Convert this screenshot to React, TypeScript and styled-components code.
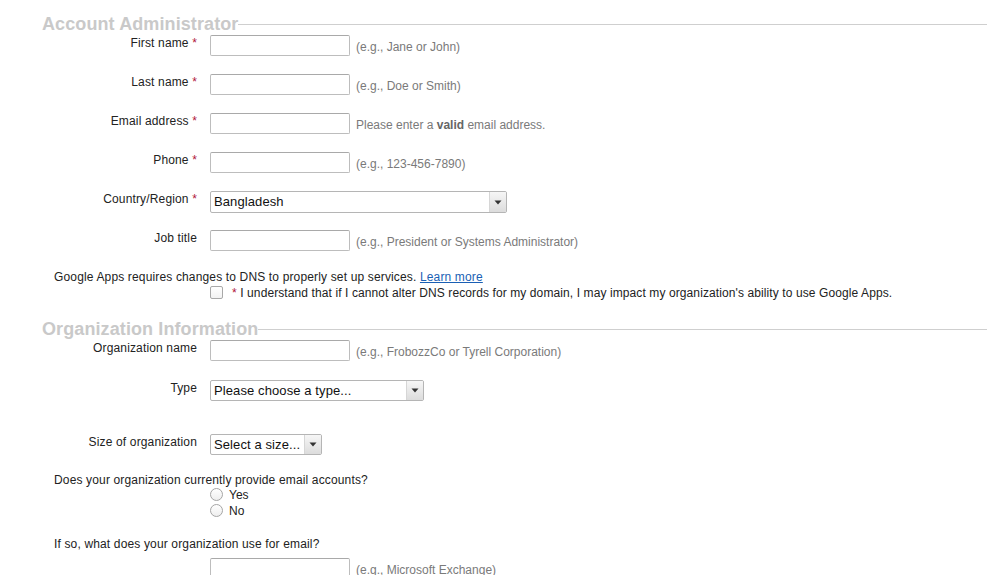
import React from "react";
import styled, { createGlobalStyle } from "styled-components";

const Global = createGlobalStyle`
  html, body { margin: 0; padding: 0; background: #fff; }
  body {
    font-family: "Liberation Sans", Arial, sans-serif;
    font-size: 12px;
    color: #222;
  }
`;

const Page = styled.div`
  padding: 15px 0 0 54px;
  width: 933px;
  overflow: hidden;
  height: 560px;
`;

const Legend = styled.div<{ $mt?: number }>`
  display: flex;
  align-items: center;
  margin: ${(p) => p.$mt ?? 0}px 0 0 -12px;
  height: 18px;
`;

const LegendText = styled.h2`
  margin: 0;
  font-size: 18px;
  line-height: 18px;
  font-weight: bold;
  letter-spacing: 0.1px;
  color: #c9c9c9;
  white-space: nowrap;
`;

const LegendRule = styled.div`
  flex: 1;
  border-top: 1px solid #cfcfcf;
  height: 0;
`;

const Rows = styled.div`
  margin-top: 2px;
`;

const Row = styled.div<{ $mb?: number }>`
  display: flex;
  align-items: flex-start;
  height: 21px;
  margin-bottom: ${(p) => p.$mb ?? 18}px;
`;

const Label = styled.label`
  width: 143px;
  margin-right: 13px;
  text-align: right;
  line-height: 15px;
  padding-top: 1px;
  letter-spacing: 0.15px;
  white-space: nowrap;
  color: #222;
`;

const Req = styled.span`
  color: #b0163a;
`;

const TextBox = styled.input`
  box-sizing: border-box;
  width: 140px;
  height: 21px;
  margin: 0;
  padding: 2px 4px;
  border: 1px solid #bdbdbd;
  border-top-color: #a9a9a9;
  border-radius: 2px;
  font: 13px "Liberation Sans", Arial, sans-serif;
  background: #fff;
  outline: none;
`;

const Hint = styled.span`
  margin-left: 6px;
  padding-top: 5px;
  line-height: 15px;
  color: #7a7a7a;
  white-space: nowrap;
  b {
    color: #666;
  }
`;

const SelectBox = styled.div<{ $w: number; $h?: number }>`
  box-sizing: border-box;
  display: flex;
  width: ${(p) => p.$w}px;
  height: ${(p) => p.$h ?? 21}px;
  border: 1px solid #b5b5b5;
  border-radius: 2px;
  background: #fff;
  overflow: hidden;
`;

const SelectValue = styled.span`
  flex: 1;
  padding-left: 3px;
  font-size: 13px;
  line-height: 19px;
  letter-spacing: 0.1px;
  color: #111;
  white-space: nowrap;
`;

const SelectArrow = styled.span`
  width: 16px;
  display: flex;
  align-items: center;
  justify-content: center;
  border-left: 1px solid #d6d6d6;
  background: linear-gradient(#f6f6f6, #dcdcdc);
`;

const Para = styled.div<{ $mt?: number }>`
  line-height: 15px;
  margin-top: ${(p) => p.$mt ?? 0}px;
  letter-spacing: 0.15px;
  color: #222;
  white-space: nowrap;
`;

const Link = styled.a`
  color: #1a5fb4;
  text-decoration: underline;
`;

const CheckLine = styled.div`
  display: flex;
  align-items: center;
  height: 15px;
  padding-left: 156px;
  letter-spacing: 0.1px;
  white-space: nowrap;
`;

const CheckBox = styled.span`
  box-sizing: border-box;
  width: 13px;
  height: 13px;
  border: 1px solid #a8a8a8;
  border-radius: 2px;
  background: linear-gradient(#fff, #f2f2f2);
  margin-right: 9px;
`;

const RadioRow = styled.div`
  display: flex;
  align-items: flex-start;
  height: 16px;
  padding-left: 156px;
`;

const Radio = styled.span`
  box-sizing: border-box;
  width: 13px;
  height: 13px;
  border: 1px solid #a5a5a5;
  border-radius: 50%;
  background: linear-gradient(#fff, #eee);
  margin-right: 6px;
`;

const RadioText = styled.span`
  line-height: 14px;
  font-size: 12px;
  color: #222;
`;

const IndentRow = styled.div<{ $mt?: number }>`
  display: flex;
  align-items: flex-start;
  padding-left: 156px;
  margin-top: ${(p) => p.$mt ?? 0}px;
`;

const Arrow = () => (
  <svg width="8" height="5" viewBox="0 0 8 5">
    <path d="M0.5 0.5 L7.5 0.5 L4 4.5 Z" fill="#333" />
  </svg>
);

const Select = ({ w, h, value }: { w: number; h?: number; value: string }) => (
  <SelectBox $w={w} $h={h}>
    <SelectValue>{value}</SelectValue>
    <SelectArrow>
      <Arrow />
    </SelectArrow>
  </SelectBox>
);

type Field = {
  label: string;
  req?: boolean;
  hint?: React.ReactNode;
  select?: { w: number; h?: number; value: string };
  mb?: number;
};

const adminFields: Field[] = [
  { label: "First name", req: true, hint: "(e.g., Jane or John)" },
  { label: "Last name", req: true, hint: "(e.g., Doe or Smith)" },
  {
    label: "Email address",
    req: true,
    hint: (
      <>
        Please enter a <b>valid</b> email address.
      </>
    ),
  },
  { label: "Phone", req: true, hint: "(e.g., 123-456-7890)" },
  { label: "Country/Region", req: true, select: { w: 297, h: 22, value: "Bangladesh" } },
  { label: "Job title", hint: "(e.g., President or Systems Administrator)", mb: 19 },
];

const orgFields: Field[] = [
  { label: "Organization name", hint: "(e.g., FrobozzCo or Tyrell Corporation)", mb: 19 },
  { label: "Type", select: { w: 214, value: "Please choose a type..." }, mb: 33 },
  { label: "Size of organization", select: { w: 112, value: "Select a size..." } },
];

const FieldRow = ({ f }: { f: Field }) => (
  <Row $mb={f.mb}>
    <Label>
      {f.label}
      {f.req && <Req> *</Req>}
    </Label>
    {f.select ? <Select {...f.select} /> : <TextBox type="text" />}
    {f.hint && <Hint>{f.hint}</Hint>}
  </Row>
);

export default function App() {
  return (
    <>
      <Global />
      <Page>
        <Legend>
          <LegendText>Account Administrator</LegendText>
          <LegendRule />
        </Legend>
        <Rows>
          {adminFields.map((f) => (
            <FieldRow key={f.label} f={f} />
          ))}
        </Rows>
        <Para>
          Google Apps requires changes to DNS to properly set up services. <Link href="#">Learn more</Link>
        </Para>
        <CheckLine>
          <CheckBox />
          <Req>*</Req>&nbsp;I understand that if I cannot alter DNS records for my domain, I may impact my
          organization's ability to use Google Apps.
        </CheckLine>
        <Legend $mt={20}>
          <LegendText>Organization Information</LegendText>
          <LegendRule />
        </Legend>
        <Rows>
          {orgFields.map((f) => (
            <FieldRow key={f.label} f={f} />
          ))}
        </Rows>
        <Para>Does your organization currently provide email accounts?</Para>
        <RadioRow>
          <Radio />
          <RadioText>Yes</RadioText>
        </RadioRow>
        <RadioRow>
          <Radio />
          <RadioText>No</RadioText>
        </RadioRow>
        <Para $mt={17}>If so, what does your organization use for email?</Para>
        <IndentRow $mt={6}>
          <TextBox type="text" />
          <Hint>(e.g., Microsoft Exchange)</Hint>
        </IndentRow>
      </Page>
    </>
  );
}
